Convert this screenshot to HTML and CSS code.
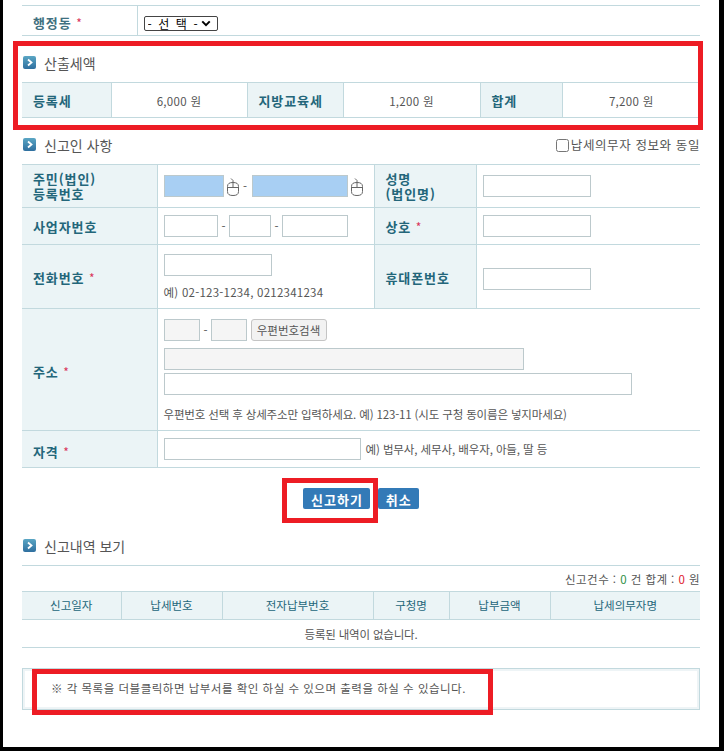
FILE: index.html
```html
<!DOCTYPE html>
<html lang="ko">
<head>
    <meta charset="UTF-8">
    <meta name="viewport" content="width=device-width, initial-scale=1.0">
    <title>등록면허세 신고</title>
    <link rel="stylesheet" href="styles.css">
</head>
<body>
    <svg class="icon-defs" width="0" height="0">
        <defs>
            <linearGradient id="bulletFill" x1="0" y1="0" x2="0" y2="1">
                <stop offset="0" stop-color="#5aa6c4"/>
                <stop offset="1" stop-color="#2f6f9f"/>
            </linearGradient>
            <symbol id="bullet" viewBox="0 0 14 14">
                <rect x="0" y="0" width="13" height="13" rx="2" fill="url(#bulletFill)"/>
                <path d="M5 3.5 L8.5 6.5 L5 9.5" fill="none" stroke="#fff" stroke-width="1.8"/>
            </symbol>
            <symbol id="mouse" viewBox="0 0 12 18">
                <path d="M4 0.5 L6 2.5 V9.5 M0.5 9.5 H11.5 M0.5 8.5 C0.5 5.5 2.5 4.5 6 4.5 C9.5 4.5 11.5 5.5 11.5 8.5 V13.5 C11.5 16.5 9.5 17.5 6 17.5 C2.5 17.5 0.5 16.5 0.5 13.5 Z" fill="none" stroke="#666" stroke-width="1"/>
            </symbol>
        </defs>
    </svg>

    <div class="page">
        <table class="grid grid-top">
            <colgroup><col class="c-115"><col></colgroup>
            <tr class="h-30">
                <th>행정동 <span class="req">*</span></th>
                <td>
                    <span class="select-wrap">
                        <select class="dong"><option>- 선 택 -</option></select>
                        <svg class="select-arrow" viewBox="0 0 12 8"><path d="M1.5 1.5 L6 6 L10.5 1.5" fill="none" stroke="#000" stroke-width="2.4"/></svg>
                    </span>
                </td>
            </tr>
        </table>

        <h3 class="section-title"><svg class="bullet"><use href="#bullet"/></svg>산출세액</h3>
        <table class="grid grid-tax">
            <colgroup>
                <col class="c-89"><col class="c-136"><col class="c-96"><col class="c-137"><col class="c-82"><col>
            </colgroup>
            <tr class="h-35">
                <th>등록세</th>
                <td class="amount">6,000 원</td>
                <th>지방교육세</th>
                <td class="amount">1,200 원</td>
                <th>합계</th>
                <td class="amount">7,200 원</td>
            </tr>
        </table>

        <div class="title-row">
            <h3 class="section-title"><svg class="bullet"><use href="#bullet"/></svg>신고인 사항</h3>
            <label class="same-check"><input type="checkbox">납세의무자 정보와 동일</label>
        </div>
        <table class="grid grid-form">
            <colgroup><col class="c-135"><col class="c-217"><col class="c-102"><col></colgroup>
            <tr class="h-43">
                <th>주민(법인)<br>등록번호</th>
                <td>
                    <div class="line">
                        <input class="box w-60 picked" type="text">
                        <svg class="mouse"><use href="#mouse"/></svg>
                        <span class="dash-tight">-</span>
                        <input class="box w-96 picked" type="text">
                        <svg class="mouse"><use href="#mouse"/></svg>
                    </div>
                </td>
                <th>성명<br>(법인명)</th>
                <td><input class="box w-108" type="text"></td>
            </tr>
            <tr class="h-37">
                <th>사업자번호</th>
                <td>
                    <div class="line gap-4">
                        <input class="box w-54" type="text"><span class="dash">-</span>
                        <input class="box w-42" type="text"><span class="dash">-</span>
                        <input class="box w-66" type="text">
                    </div>
                </td>
                <th>상호 <span class="req">*</span></th>
                <td><input class="box w-108" type="text"></td>
            </tr>
            <tr class="h-64 row-low">
                <th>전화번호 <span class="req">*</span></th>
                <td>
                    <input class="box w-108" type="text">
                    <p class="hint hint-phone">예) 02-123-1234, 0212341234</p>
                </td>
                <th>휴대폰번호</th>
                <td class="cell-low"><input class="box w-108" type="text"></td>
            </tr>
            <tr class="h-122 row-lower">
                <th>주소 <span class="req">*</span></th>
                <td colspan="3">
                    <div class="line gap-4">
                        <input class="box w-36 locked" type="text"><span class="dash">-</span>
                        <input class="box w-36 locked" type="text">
                        <button class="zip-btn" type="button">우편번호검색</button>
                    </div>
                    <input class="box w-360 locked block addr-1" type="text">
                    <input class="box w-468 block addr-2" type="text">
                    <p class="hint hint-addr">우편번호 선택 후 상세주소만 입력하세요. 예) 123-11 (시도 구청 동이름은 넣지마세요)</p>
                </td>
            </tr>
            <tr class="h-37 row-lower">
                <th>자격 <span class="req">*</span></th>
                <td colspan="3">
                    <div class="line">
                        <input class="box w-197" type="text">
                        <span class="hint hint-side">예) 법무사, 세무사, 배우자, 아들, 딸 등</span>
                    </div>
                </td>
            </tr>
        </table>

        <div class="actions">
            <button class="btn" type="button">신고하기</button>
            <button class="btn" type="button">취소</button>
        </div>

        <h3 class="section-title title-lined"><svg class="bullet"><use href="#bullet"/></svg>신고내역 보기</h3>
        <p class="count">신고건수 : <span class="num-green">0</span> 건 합계 : <span class="num-red">0</span> 원</p>
        <table class="grid grid-list">
            <colgroup>
                <col class="c-99"><col class="c-101"><col class="c-151"><col class="c-76"><col class="c-101"><col>
            </colgroup>
            <tr class="h-28">
                <th>신고일자</th>
                <th>납세번호</th>
                <th>전자납부번호</th>
                <th>구청명</th>
                <th>납부금액</th>
                <th>납세의무자명</th>
            </tr>
            <tr class="h-28">
                <td colspan="6" class="empty">등록된 내역이 없습니다.</td>
            </tr>
        </table>

        <div class="note">※ 각 목록을 더블클릭하면 납부서를 확인 하실 수 있으며 출력을 하실 수 있습니다.</div>

        <!-- red annotation boxes drawn over the capture -->
        <div class="mark mark-tax"></div>
        <div class="mark mark-submit"></div>
        <div class="mark mark-note"></div>
    </div>
</body>
</html>
```

FILE: styles.css
```css
html, body {
    margin: 0;
    padding: 0;
    height: 751px;
    overflow: hidden;
    background-color: #000;
}
body {
    font-family: "Noto Sans CJK KR", "Noto Sans", sans-serif;
    font-size: 11.5px;
    color: #555;
}
.icon-defs {
    position: absolute;
}
.page {
    position: relative;
    box-sizing: border-box;
    width: 716px;
    height: 747px;
    margin-left: 3px;
    padding: 5px 19px 0;
    background: #fff;
}

/* tables */
.grid {
    width: 678px;
    table-layout: fixed;
    border-collapse: collapse;
}
.grid th, .grid td {
    padding: 0;
    border: 1px solid #c2d9de;
    border-left: none;
    border-right: none;
}
.grid th {
    padding-left: 11px;
    background-color: #ebf4f6;
    color: #23667a;
    font-size: 13px;
    font-weight: bold;
    letter-spacing: 0.9px;
    line-height: 15px;
    text-align: left;
    border-right: 1px solid #c2d9de;
}
.grid td {
    padding-left: 6px;
    border-right: 1px solid #c2d9de;
}
.grid tr > :last-child {
    border-right: none;
}
.grid-top th {
    padding-top: 4px;
    background-color: #fff;
    color: #3f7080;
}
.grid-top td {
    padding-top: 4px;
}
.grid-tax td.amount {
    padding: 1px 0 0;
    text-align: center;
    letter-spacing: 0.3px;
}
.grid-form .row-low th {
    padding-top: 2px;
}
.grid-form td.cell-low {
    padding-top: 4px;
}
.grid-form .row-lower th {
    padding-top: 4px;
}
.grid-list th {
    padding-left: 0;
    text-align: center;
    font-size: 11.5px;
    font-weight: normal;
    letter-spacing: 0;
}
.grid-list td.empty {
    padding: 0;
    text-align: center;
    letter-spacing: -0.2px;
}

.c-76 { width: 76px; }
.c-82 { width: 82px; }
.c-89 { width: 89px; }
.c-96 { width: 96px; }
.c-99 { width: 99px; }
.c-101 { width: 101px; }
.c-102 { width: 102px; }
.c-115 { width: 115px; }
.c-135 { width: 135px; }
.c-136 { width: 136px; }
.c-137 { width: 137px; }
.c-151 { width: 151px; }
.c-217 { width: 217px; }

.h-28 { height: 28px; }
.h-30 { height: 30px; }
.h-35 { height: 35px; }
.h-37 { height: 37px; }
.h-43 { height: 43px; }
.h-64 { height: 64px; }
.h-122 { height: 122px; }

.req {
    color: #d9365a;
    font-weight: normal;
    font-size: 12px;
}
.select-wrap {
    position: relative;
    display: inline-block;
    vertical-align: middle;
}
.dong {
    display: block;
    box-sizing: border-box;
    width: 74px;
    height: 15px;
    padding: 0 0 0 3px;
    appearance: none;
    font-family: inherit;
    font-size: 12px;
    line-height: 13px;
    letter-spacing: 1.6px;
    background: #fff;
    color: #000;
    border: 1px solid #444;
    border-radius: 2px;
}
.select-arrow {
    position: absolute;
    right: 7px;
    top: 4px;
    width: 10px;
    height: 7px;
}

/* headings */
.section-title {
    display: flex;
    align-items: center;
    box-sizing: border-box;
    height: 46px;
    margin: 0;
    padding-top: 8px;
    font-size: 14px;
    font-weight: normal;
    color: #555;
}
.bullet {
    width: 14px;
    height: 14px;
    margin: 0 7px 0 1px;
}
.title-row {
    display: flex;
    justify-content: space-between;
    align-items: flex-start;
}
.same-check {
    display: flex;
    align-items: center;
    margin-top: 20px;
    font-size: 12.5px;
    letter-spacing: 0.6px;
    line-height: 14px;
}
.same-check input {
    width: 13px;
    height: 13px;
    margin: 0 2px 0 0;
}
.title-lined {
    height: 46px;
    margin-top: 11px;
    padding-top: 6px;
    border-bottom: 1px solid #c2d9de;
}

/* form controls */
.line {
    display: flex;
    align-items: center;
}
.gap-4 {
    gap: 4px;
}
.box {
    box-sizing: border-box;
    height: 22px;
    margin: 0;
    padding: 0 3px;
    background: #fff;
    border: 1px solid #bcc9cc;
}
.block {
    display: block;
}
.picked {
    background-color: #a8cff3;
}
.locked {
    background-color: #f5f5f5;
}
.w-36 { width: 36px; }
.w-42 { width: 42px; }
.w-54 { width: 54px; }
.w-60 { width: 60px; }
.w-66 { width: 66px; }
.w-96 { width: 96px; }
.w-108 { width: 108px; }
.w-197 { width: 197px; }
.w-360 { width: 360px; }
.w-468 { width: 468px; }
.mouse {
    width: 12px;
    height: 18px;
    margin: 2px 0 0 3px;
}
.dash-tight {
    width: 13px;
    text-align: center;
}
.dash {
    width: 3px;
    text-align: center;
}
.zip-btn {
    box-sizing: border-box;
    width: 76px;
    height: 22px;
    padding: 0;
    font-family: inherit;
    font-size: 11.5px;
    color: #555;
    background-color: #f2f2f2;
    border: 1px solid #c4c4c4;
    border-radius: 3px;
}
.addr-1 {
    margin-top: 7px;
}
.addr-2 {
    margin-top: 3px;
}
.hint {
    margin: 0;
    font-size: 11.5px;
    line-height: 14px;
}
.hint-phone {
    margin-top: 9px;
    letter-spacing: 0.25px;
}
.hint-addr {
    margin-top: 12px;
    letter-spacing: -0.15px;
}
.hint-side {
    margin-left: 5px;
    letter-spacing: -0.1px;
}

/* buttons */
.actions {
    display: flex;
    justify-content: flex-start;
    gap: 8px;
    margin-top: 20px;
    padding-left: 281px;
}
.btn {
    box-sizing: border-box;
    height: 21px;
    padding: 1px 7px 0 8px;
    font-family: inherit;
    font-size: 13px;
    font-weight: bold;
    letter-spacing: 1px;
    line-height: 19px;
    color: #fff;
    background-color: #337ab7;
    border: none;
    border-radius: 2px;
}

/* list */
.count {
    height: 25px;
    margin: 0;
    line-height: 27px;
    letter-spacing: 0.45px;
    text-align: right;
}
.num-green { color: #2f8f46; }
.num-red { color: #e0202c; }
.note {
    box-sizing: border-box;
    height: 42px;
    margin-top: 20px;
    padding-left: 28px;
    line-height: 38px;
    letter-spacing: 0.5px;
    border: 1px solid #c2d9de;
    box-shadow: inset 0 0 0 2px #eef4f6;
}

/* annotations */
.mark {
    position: absolute;
    box-sizing: border-box;
    border: 5px solid #ed1c24;
}
.mark-tax {
    left: 10px;
    top: 41px;
    width: 690px;
    height: 89px;
}
.mark-submit {
    left: 279px;
    top: 478px;
    width: 96px;
    height: 45px;
}
.mark-note {
    left: 29px;
    top: 669px;
    width: 461px;
    height: 46px;
}
```
